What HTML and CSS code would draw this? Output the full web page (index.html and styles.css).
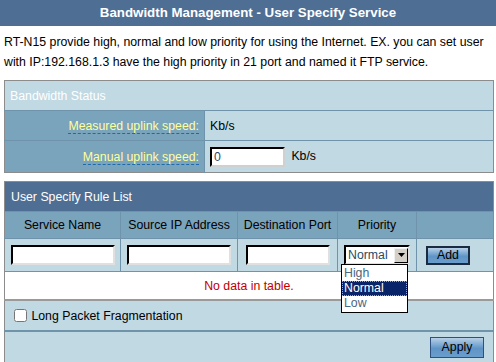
FILE: index.html
```html
<!DOCTYPE html>
<html lang="en">
<head>
  <meta charset="UTF-8" />
  <title>Bandwidth Management - User Specify Service</title>
  <link rel="stylesheet" href="styles.css">
</head>
<body>

  <div class="title-bar">Bandwidth Management - User Specify Service</div>

  <div class="desc">
    RT-N15 provide high, normal and low priority for using the Internet. EX. you can set user
    with IP:192.168.1.3 have the high priority in 21 port and named it FTP service.
  </div>

  <table class="form-table status-table">
    <tr>
      <td colspan="2" class="table-head">Bandwidth Status</td>
    </tr>
    <tr>
      <th><span class="hint">Measured uplink speed:</span></th>
      <td>Kb/s</td>
    </tr>
    <tr>
      <th><span class="hint">Manual uplink speed:</span></th>
      <td><input type="text" class="speed-input" value="0" /> Kb/s</td>
    </tr>
  </table>

  <table class="form-table rule-table">
    <tr>
      <td colspan="5" class="table-head">User Specify Rule List</td>
    </tr>
    <tr class="col-head">
      <th class="c1">Service Name</th>
      <th class="c2">Source IP Address</th>
      <th class="c3">Destination Port</th>
      <th class="c4">Priority</th>
      <th></th>
    </tr>
    <tr class="input-row">
      <td><input type="text" class="rule-input w1" /></td>
      <td><input type="text" class="rule-input w1" /></td>
      <td><input type="text" class="rule-input w3" /></td>
      <td class="prio-cell">
        <div class="select">
          <span class="select-text">Normal</span>
          <span class="select-arrow">
            <svg width="7" height="4" viewBox="0 0 7 4"><path d="M0 0h7L3.5 4z" fill="#000"/></svg>
          </span>
        </div>
        <ul class="select-list">
          <li>High</li>
          <li class="picked">Normal</li>
          <li>Low</li>
        </ul>
      </td>
      <td class="add-cell"><button class="btn add-btn">Add</button></td>
    </tr>
    <tr class="empty-row">
      <td colspan="5">No data in table.</td>
    </tr>
    <tr class="check-row">
      <td colspan="5"><label><input type="checkbox" class="check" /> Long Packet Fragmentation</label></td>
    </tr>
    <tr class="apply-row">
      <td colspan="5"><button class="btn apply-btn">Apply</button></td>
    </tr>
  </table>

</body>
</html>
```

FILE: styles.css
```css
body {
  margin: 0;
  font-family: 'Liberation Sans', Arial, sans-serif;
  font-size: 12px;
  color: #000;
  background: #fff;
  width: 496px;
  height: 362px;
  overflow: hidden;
}

.title-bar {
  height: 26px;
  line-height: 26px;
  background: #4e6e94;
  color: #fff;
  font-weight: bold;
  font-size: 13.3px;
  text-align: center;
}

.desc {
  padding: 6px 4px 0;
  line-height: 20px;
  font-size: 12.3px;
}

.form-table {
  width: 490px;
  margin: 8px 0 0 4px;
  border-collapse: collapse;
  border: 1px solid #8c8c8c;
}

.form-table td,
.form-table th {
  padding: 0;
}

.table-head {
  background: #4e6e94;
  color: #fff;
  font-size: 12.3px;
  height: 29px;
  padding-left: 6px !important;
  border-bottom: 1px solid #6e93ab;
}

.status-table th {
  width: 194px;
  background: #7aa3bc;
  text-align: right;
  font-weight: normal;
  font-size: 12.3px;
  padding-right: 5px !important;
  height: 29px;
  border-bottom: 1px solid #6e93ab;
  border-right: 1px solid #6e93ab;
}

.status-table td {
  background: #c1d9e3;
  font-size: 12.3px;
  padding-left: 5px !important;
  border-bottom: 1px solid #6e93ab;
}

.status-table tr:last-child th,
.status-table tr:last-child td {
  height: 31px;
  border-bottom: none;
}

.hint {
  color: #ffff99;
  border-bottom: 1px dashed #1e6aa8;
}

.speed-input {
  width: 67px;
  height: 16px;
  padding: 0 2px;
  margin: 0 3px 0 0;
  font-family: inherit;
  font-size: 12.3px;
  color: #2b4a66;
  border: 2px inset #d0d0d0;
  border-top-color: #555;
  border-left-color: #555;
  vertical-align: middle;
}

.rule-table {
  margin-top: 8px;
}

.col-head th {
  background: #7aa3bc;
  font-weight: normal;
  font-size: 12.3px;
  height: 26px;
  border-right: 1px solid #6e93ab;
  border-bottom: 1px solid #6e93ab;
}

.col-head .c1 { width: 115px; }
.col-head .c2 { width: 116px; }
.col-head .c3 { width: 99px; }
.col-head .c4 { width: 78px; }

.input-row td {
  background: #c1d9e3;
  height: 32px;
  text-align: center;
  border-right: 1px solid #6e93ab;
}

.rule-input {
  height: 16px;
  padding: 0;
  margin: 0;
  border: 2px inset #e0e0e0;
  border-top-color: #555;
  border-left-color: #555;
  vertical-align: middle;
}

.w1 { width: 100px; }
.w3 { width: 80px; }

.prio-cell {
  position: relative;
}

.select {
  display: flex;
  align-items: center;
  width: 62px;
  height: 16px;
  margin: 0 auto;
  background: #fff;
  border: 2px inset #e0e0e0;
  border-top-color: #555;
  border-left-color: #555;
}

.select-text {
  flex: 1;
  text-align: left;
  padding-left: 2px;
  font-size: 12.3px;
  color: #2b4a66;
}

.select-arrow {
  width: 14px;
  height: 15px;
  display: flex;
  align-items: center;
  justify-content: center;
  background: #d4d0c8;
  border: 1px outset #f0f0f0;
  border-right-color: #404040;
  border-bottom-color: #404040;
  box-sizing: border-box;
}

.select-list {
  position: absolute;
  left: 3px;
  top: 25px;
  width: 65px;
  margin: 0;
  padding: 1px 0;
  list-style: none;
  background: #fff;
  border: 1px solid #000;
  text-align: left;
  font-size: 12.3px;
  color: #4a6680;
  z-index: 2;
}

.select-list li {
  height: 15px;
  line-height: 15px;
  padding-left: 2px;
}

.select-list .picked {
  background: #0a246a;
  color: #fff;
  outline: 1px dotted #c8b040;
  outline-offset: -1px;
}

.btn {
  font-family: inherit;
  font-size: 12.3px;
  color: #000;
  background: linear-gradient(#b8d0e8, #5f95c6 55%, #6a9dcc);
  cursor: pointer;
}

.input-row .add-cell {
  text-align: left;
  padding-left: 9px !important;
  border-right: none;
}

.add-btn {
  width: 44px;
  height: 19px;
  padding: 0;
  border: 2px solid #1a2a40;
  vertical-align: middle;
}

.empty-row td {
  background: #fff;
  height: 27px;
  text-align: center;
  color: #c00000;
  font-size: 12.3px;
  border-top: 1px solid #8c8c8c;
  border-bottom: 2px solid #9a9a9a;
}

.check-row td {
  background: #c1d9e3;
  height: 29px;
  padding-left: 5px !important;
  font-size: 12.3px;
  border-bottom: 2px solid #6e93ab;
}

.check {
  width: 13px;
  height: 13px;
  margin: 0 1px 0 4px;
  vertical-align: -2px;
}

.apply-row td {
  background: #c1d9e3;
  height: 30px;
  text-align: right;
  padding-right: 9px !important;
}

.apply-btn {
  width: 54px;
  height: 21px;
  padding: 0;
  border: 1px solid #2f4f7f;
  vertical-align: middle;
}
```
